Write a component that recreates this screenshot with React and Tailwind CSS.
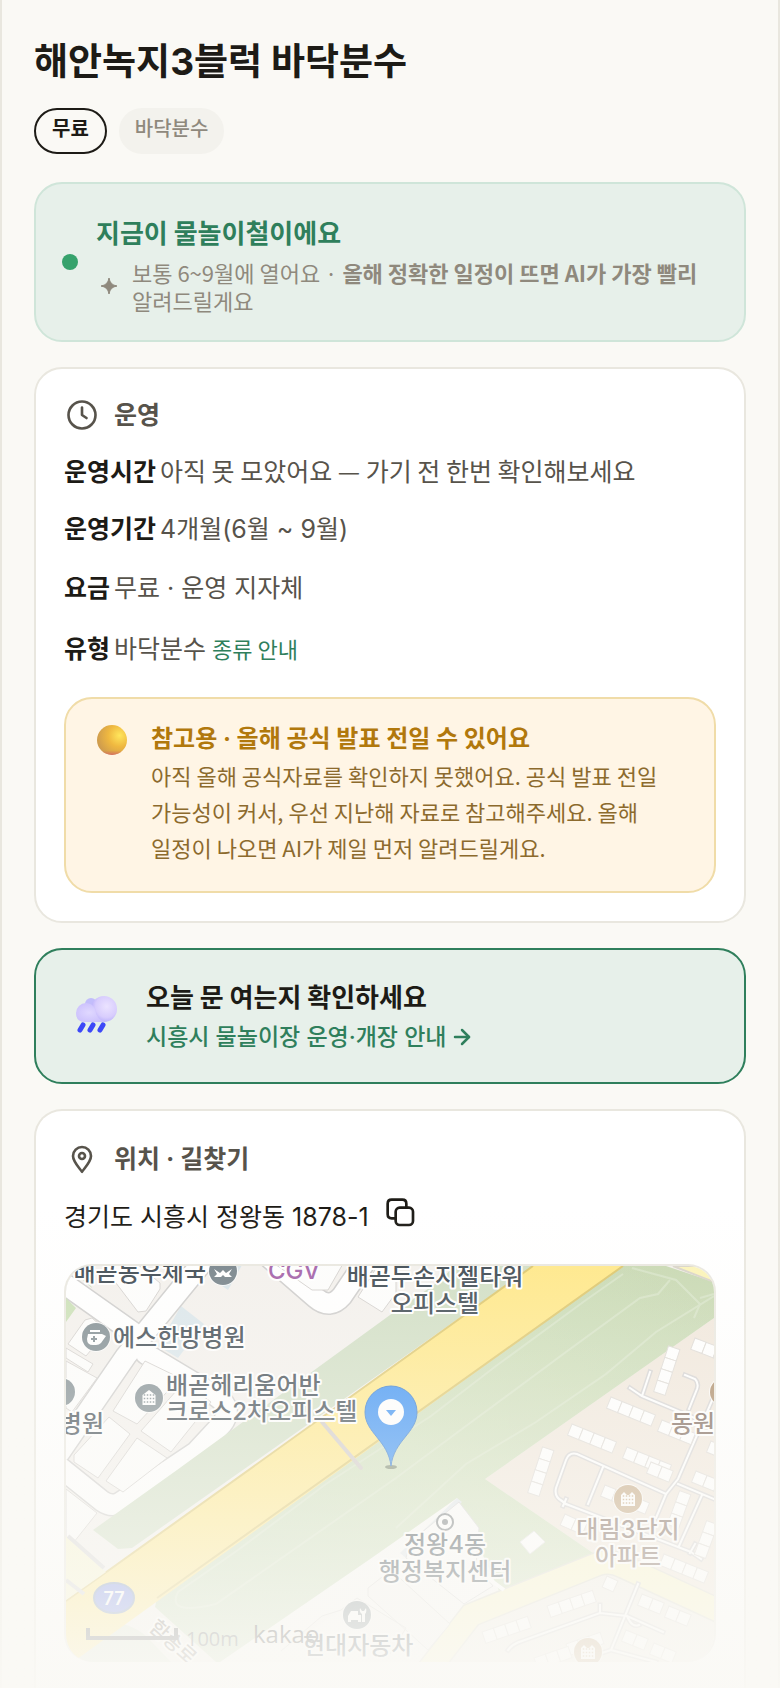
import React from 'react';
import { ArrowRight } from 'lucide-react';

const infoRows = [
  { label: '운영시간', value: '아직 못 모았어요 — 가기 전 한번 확인해보세요' },
  { label: '운영기간', value: '4개월(6월 ~ 9월)', mixed: true },
  { label: '요금', value: '무료 · 운영 지자체', mixed: true },
  { label: '유형', value: '바닥분수', link: '종류 안내' }
];

// Rows of apartment blocks: start point, number of blocks, direction in degrees
const apartmentRows = [
  { x: 629, y: 72, n: 3, angle: 21 },
  { x: 612, y: 83, n: 4, angle: 108 },
  { x: 545, y: 131, n: 4, angle: 22 },
  { x: 506, y: 158, n: 4, angle: 22 },
  { x: 561, y: 181, n: 4, angle: 22 },
  { x: 596, y: 154, n: 3, angle: 22 },
  { x: 486, y: 184, n: 4, angle: 108 },
  { x: 645, y: 175, n: 2, angle: 22 },
  { x: 630, y: 205, n: 3, angle: 22 },
  { x: 585, y: 196, n: 2, angle: 22 },
  { x: 499, y: 248, n: 2, angle: 24 },
  { x: 539, y: 219, n: 4, angle: 22 },
  { x: 623, y: 228, n: 3, angle: 110 },
  { x: 598, y: 288, n: 4, angle: 22 },
  { x: 650, y: 258, n: 3, angle: 110 },
  { x: 541, y: 310, n: 1, angle: 24 },
  { x: 481, y: 340, n: 4, angle: -19 },
  { x: 416, y: 366, n: 4, angle: -19 },
  { x: 576, y: 328, n: 2, angle: 22 },
  { x: 603, y: 340, n: 2, angle: 22 },
  { x: 560, y: 364, n: 2, angle: 22 },
  { x: 588, y: 377, n: 2, angle: 22 },
  { x: 500, y: 378, n: 3, angle: -19 },
  { x: 468, y: 392, n: 3, angle: -19 }
];

const parcels = [
  'M31 -8 L72 46 L80 45 L94 23 L94 17 L64 -8 Z',
  'M2 78 L19 54 L26 52 L41 65 L20 90 Z',
  'M0 82 L27 98 L22 106 L0 92 Z',
  'M0 95 L31 112 L6 146 L0 142 Z',
  'M79 95 L114 112 L71 158 L47 145 Z',
  'M118 116 L145 136 L105 186 L75 165 Z',
  'M43 151 L64 168 L32 212 L8 196 L8 189 Z',
  'M71 172 L101 192 L57 226 L40 215 Z',
  'M0 223 L31 247 L8 276 L0 271 Z',
  'M292 31 L314 -4 L330 -4 L330 27 L316 46 Z',
  'M206 -4 L246 24 L262 24 L278 -4 Z'
];

const lanes = [
  'M564 122 L576 130 L648 160 M576 130 L584 106 M619 109 L629 113 Q633 117 631 123 L623 143',
  'M500 238 L496 235 Q488 231 490 222 L500 194 Q503 186 511 188 L600 228 L612 213 L648 130',
  'M522 238 L537 201 M496 235 L500 238 L625 286 M500 233 L497 240 M600 228 L590 252 M612 218 L648 233 M636 229 L613 280 M625 286 L635 293 M624 287 L629 278',
  'M442 384 Q446 378 456 375 L534 347 L561 350 L597 366 M534 347 L534 339 M572 318 L545 384 L590 396 M561 350 Q566 362 573 359 M545 384 L520 392'
];

function PlacePin({ cx, cy, fill, children }) {
  return (
    <g transform={`translate(${cx} ${cy})`}>
      <circle r="15" fill="#fff" opacity="0.8" />
      <circle r="14" fill={fill} />
      {children}
    </g>
  );
}

function BuildingGlyph({ dot, twin }) {
  return (
    <>
      <path d={twin ? 'M-7 7 V-4 L-4 -7 L-1 -4 L1 -4 L4 -7 L7 -4 V7 Z' : 'M-6.5 7 V-3 L0 -8 L6.5 -3 V7 Z'} fill="#fff" />
      {[-3, 0.5, 4].map((y) =>
        [-4.5, -1.5, 1.5, 4.5].map((x) => (
          <rect key={`${x}${y}`} x={x - 0.75} y={y - 0.75} width="1.5" height="1.5" fill={dot} />
        ))
      )}
    </>
  );
}

const mapText = "font-['Inter','Noto_Sans_CJK_KR',sans-serif] text-[24px] font-medium";
const halo = { stroke: '#fff', strokeWidth: 4, strokeLinejoin: 'round', paintOrder: 'stroke' };

function MapView() {
  return (
    <svg viewBox="0 0 648 396" preserveAspectRatio="xMidYMid slice" className="block w-full" role="img" aria-label="지도">
      <defs>
        <linearGradient id="park" x1="1" y1="0" x2="0" y2="1">
          <stop offset="0" stopColor="#c5d7af" />
          <stop offset="0.5" stopColor="#cfdfba" />
          <stop offset="1" stopColor="#c6dab8" />
        </linearGradient>
      </defs>
      <rect width="648" height="396" fill="#f3f0ec" />

      {/* City blocks, top left */}
      <path d="M115 40 L138 58 L112 92 L92 80 Z M146 -8 L180 -8 L162 24 L150 16 Z" fill="#d9e5ea" />
      <g fill="none" strokeLinejoin="round" strokeLinecap="round">
        <g stroke="#cccbca" strokeWidth="23">
          <path d="M-10 12 L72 70 M140 -8 L60 90 L-6 186 M190 -20 L250 32 Q264 44 276 30 L310 -20" />
          <path d="M80 88 L150 130 Q168 142 156 158 L130 186 L55 236 Q46 242 36 235 L-10 198" />
        </g>
        <g stroke="#fff" strokeWidth="20">
          <path d="M-10 12 L72 70 M140 -8 L60 90 L-6 186 M190 -20 L250 32 Q264 44 276 30 L310 -20" />
          <path d="M80 88 L150 130 Q168 142 156 158 L130 186 L55 236 Q46 242 36 235 L-10 198" />
        </g>
      </g>
      <path d="M0 32 L10 42 L0 56 Z M10 8 L22 14 L26 22 Z" fill="#c9dfb4" />
      {parcels.map((d) => (
        <path key={d} d={d} fill="#fdfdfc" stroke="#d3d0cd" strokeWidth="1" />
      ))}

      {/* Housing area */}
      <path d="M648 52 L419 213 L527 287 L648 340 Z" fill="#f0e6da" />
      <path d="M381 396 L424 345 L541 300 L648 345 V396 Z" fill="#f1ede5" />
      <path d="M154 396 L307 291 L391 232 L440 328 L390 360 L360 396 Z" fill="#f9f8f6" />

      {/* Park strips along the highway */}
      <path d="M27 264 L111 204 L324 49 L375 14 L388 0 L467 0 L66 282 L52 283 Z" fill="#cfddc2" />
      <path d="M557 0 L91 332 L89 341 L150 396 L154 396 L307 291 L391 232 L434 327 L527 287 L419 213 L648 52 V16 L600 0 Z" fill="url(#park)" />
      <path d="M0 365 Q50 345 80 370 L105 396 H0 Z" fill="#dce5d3" />
      <g fill="none" stroke="#dde8cf" strokeWidth="2" opacity="0.6">
        <path d="M557 8 L520 34 L430 100 L365 150 L260 218 L172 284 L112 326 Q100 350 150 338 L330 212 L400 160 L500 86 L574 32 L592 28 L604 14 M648 30 L590 66 L540 108 L470 156 L400 198 L330 262" />
        <path d="M566 2 L610 14 L634 38 L628 52 M610 14 L622 26 M634 32 L648 28" />
      </g>

      {/* Highway */}
      <path d="M467 0 L0 335 V396 H7 L557 0 Z" fill="#ffe784" />
      <path d="M467 0 L0 335 M557 0 L91 332" fill="none" stroke="#dcc568" strokeWidth="2" />
      <path d="M0 270 L40 306 L0 334 Z" fill="#f8f5cf" />
      <path d="M2 270 L38 302 M0 314 L18 328" stroke="#d6d5d5" strokeWidth="4" />
      <path d="M256 156 L295 202" stroke="#cfc8c4" strokeWidth="4" strokeLinecap="round" />
      <path d="M607 0 L648 16 V0 Z" fill="#fbf3b5" stroke="#d7d2c6" strokeWidth="2" />

      {/* Side road */}
      <path d="M350 420 L405 349 L532 298 Q545 294 558 301 L660 348" fill="none" stroke="#dcdacc" strokeWidth="25" />
      <path d="M350 420 L405 349 L532 298 Q545 294 558 301 L660 348" fill="none" stroke="#faf5c6" strokeWidth="22" />

      {/* Lanes and apartments */}
      <g fill="none" strokeLinecap="square">
        {lanes.map((d) => <path key={d} d={d} stroke="#d2d0d0" strokeWidth="5" />)}
        {lanes.map((d) => <path key={`${d}-fill`} d={d} stroke="#fff" strokeWidth="2" />)}
      </g>
      {apartmentRows.map((row) => (
        <g key={`${row.x}-${row.y}`} transform={`translate(${row.x} ${row.y}) rotate(${row.angle})`} fill="#fff" stroke="#dcd8d3" strokeWidth="1">
          {Array.from({ length: row.n }, (_, i) => (
            <rect key={i} x={i * 12} y={row.angle > 90 ? -2 : 0} width="12" height="12" />
          ))}
        </g>
      ))}

      {/* Civic centre */}
      <path d="M334 287 L391 232 L396 236 L356 272 L340 292 Z" fill="#dfe5ea" />
      <path d="M344 276 L393 236 L413 262 L410 300 L427 320 L398 338 L340 292 Z" fill="#fbfafa" stroke="#d4d4d4" />
      <path d="M454 276 L468 265 L479 276 L464 288 Z" fill="#fff" stroke="#e4e4e4" />
      <path d="M302 322 L325 304 L384 358 L362 384 L302 330 Z M275 344 L291 332 L340 362 L324 388 M215 385 L256 350 L275 344" fill="#f7f5f3" stroke="#dad8d6" />
      <path d="M412 305 L438 324" stroke="#fff" strokeWidth="4" />

      {/* Places */}
      <PlacePin cx={157} cy={5} fill="#727f86">
        <path d="M-9 -2 L-3 2 L0 -1 L3 2 L9 -2 L6 3 L9 6 H2 L0 4 L-2 6 H-9 L-6 3 Z" fill="#fff" />
      </PlacePin>
      <PlacePin cx={30} cy={71} fill="#7b888d">
        <path d="M-6 -7 H4 V-5 H-6 Z M-8 -3 H6 L10 -1 L5 6 Q3 8 0 8 H-3 Q-9 8 -9 2 Z" fill="#fff" />
        <path d="M-2 -1 V5 M-5 2 H1" stroke="#7b888d" strokeWidth="2" />
      </PlacePin>
      <PlacePin cx={83} cy={132} fill="#7b888d">
        <BuildingGlyph dot="#7b888d" />
      </PlacePin>
      <PlacePin cx={-5} cy={126} fill="#7b888d" />
      <PlacePin cx={658} cy={126} fill="#a5825c" />
      <PlacePin cx={562} cy={233} fill="#bf9f76">
        <BuildingGlyph dot="#bf9f76" twin />
      </PlacePin>
      <PlacePin cx={522} cy={386} fill="#bf9f76">
        <BuildingGlyph dot="#bf9f76" twin />
      </PlacePin>
      <PlacePin cx={291} cy={349} fill="#7b888d">
        <path d="M-9 7 V1 L-6 -4 H1 V0 H4 V7 H1 V5 H-6 V7 Z M5 7 V-1 Q2 -3 3 -7 L5 -4 H7 L9 -7 Q10 -3 8 -1 V7 Z" fill="#fff" />
      </PlacePin>
      <circle cx="379" cy="256" r="8" fill="#fff" stroke="#6c7276" strokeWidth="2" />
      <circle cx="379" cy="256" r="3" fill="#6c7276" />

      <g className={mapText} fill="#36424b" {...halo}>
        <text x="140" y="15" textAnchor="end">배곧동우체국</text>
        <text x="202" y="13" fill="#a05ca6">CGV</text>
        <text x="369" y="19" textAnchor="middle">배곧두손지젤타워</text>
        <text x="369" y="46" textAnchor="middle">오피스텔</text>
        <text x="47" y="80">에스한방병원</text>
        <text x="100" y="128">배곧헤리움어반</text>
        <text x="100" y="154">크로스2차오피스텔</text>
        <text x="38" y="166" textAnchor="end">병원</text>
        <text x="379" y="287" textAnchor="middle">정왕4동</text>
        <text x="379" y="314" textAnchor="middle">행정복지센터</text>
        <text x="237" y="388">현대자동차</text>
        <text x="605" y="166" fill="#71594c">동원</text>
        <text x="562" y="272" textAnchor="middle" fill="#71594c">대림3단지</text>
        <text x="562" y="299" textAnchor="middle" fill="#71594c">아파트</text>
        <text transform="translate(82 363) rotate(42)" className="text-[20px]" fill="#77716b">함송로</text>
      </g>

      {/* Route shield */}
      <ellipse cx="48" cy="332" rx="20" ry="15" fill="#7388e8" stroke="#728bb9" strokeWidth="2" />
      <text x="48" y="339" textAnchor="middle" fill="#fff" className="font-['Inter',sans-serif] text-[18px] font-semibold">77</text>

      {/* Scale and provider */}
      <path d="M22 362 V372 H110 V362" fill="none" stroke="#55585c" strokeWidth="4" />
      <text x="120" y="380" fill="#55585c" className="font-['Open_Sans',sans-serif] text-[20px]">100m</text>
      <text x="187" y="377" fill="#333" className="font-['Open_Sans',sans-serif] text-[24px]">kakao</text>

      {/* Selected spot */}
      <ellipse cx="325" cy="201" rx="6" ry="2" fill="#4f5b46" opacity="0.7" />
      <path d="M325 200 C322 174 299 167 299 146 A26 26 0 0 1 351 146 C351 167 328 174 325 200 Z" fill="#2f8bf4" stroke="#2a74cc" strokeWidth="1" />
      <circle cx="325" cy="146" r="13" fill="#fff" />
      <path d="M320 144 H330 L325 150 Z" fill="#2f8bf4" />
    </svg>
  );
}

function Orb() {
  return (
    <svg viewBox="0 0 30 30" className="size-[30px] shrink-0" aria-hidden="true">
      <defs>
        <radialGradient id="orb" cx="0.75" cy="0.35" r="0.75">
          <stop offset="0" stopColor="#ffe65c" />
          <stop offset="0.5" stopColor="#efb840" />
          <stop offset="1" stopColor="#cf9c4d" />
        </radialGradient>
        <linearGradient id="orbBase" x1="0" y1="0" x2="0" y2="1">
          <stop offset="0.85" stopColor="#d9705c" stopOpacity="0" />
          <stop offset="1" stopColor="#d9606c" stopOpacity="0.8" />
        </linearGradient>
      </defs>
      <circle cx="15" cy="15" r="15" fill="url(#orb)" />
      <circle cx="15" cy="15" r="15" fill="url(#orbBase)" />
    </svg>
  );
}

function RainCloud() {
  return (
    <svg viewBox="1 2 48 48" className="size-12 shrink-0" aria-hidden="true">
      <defs>
        <radialGradient id="cloud" cx="0.6" cy="0.4" r="0.6">
          <stop offset="0" stopColor="#ebe3ff" />
          <stop offset="0.7" stopColor="#d8cdfd" />
          <stop offset="1" stopColor="#bdb3fb" />
        </radialGradient>
        <radialGradient id="cloudFront" cx="0.45" cy="0.5" r="0.6">
          <stop offset="0" stopColor="#e0d8ff" />
          <stop offset="1" stopColor="#cabffc" />
        </radialGradient>
      </defs>
      <circle cx="20" cy="14" r="6" fill="#c2bdfb" />
      <circle cx="33" cy="19" r="13" fill="url(#cloud)" />
      <path d="M15 13 A10 10 0 0 0 5 23 Q5 32 14 32 H34 Q25 29 24 19 A10 10 0 0 0 15 13 Z" fill="url(#cloudFront)" />
      <g stroke="#3d48f8" strokeWidth="5" strokeLinecap="round">
        <path d="M12 35 L9 40 M22 35 L19 40 M32 35 L29 40" />
      </g>
    </svg>
  );
}

function SectionTitle({ icon, children }) {
  return (
    <h2 className="flex items-center gap-[14px] font-['Inter','Noto_Sans_CJK_KR',sans-serif] text-[25px]/[36px] font-bold text-[#57534b]">
      {icon}
      {children}
    </h2>
  );
}

const iconProps = {
  viewBox: '0 0 24 24',
  fill: 'none',
  stroke: 'currentColor',
  strokeWidth: 1.75,
  strokeLinecap: 'round',
  strokeLinejoin: 'round',
  'aria-hidden': true
};

export default function App() {
  return (
    <div className="relative min-h-screen border-x-2 border-[#e9e7df] bg-[#faf9f5] px-8 pt-9 font-['Noto_Sans_CJK_KR',sans-serif] text-[#1d1b16]">
      <h1 className="font-['Inter','Noto_Sans_CJK_KR',sans-serif] text-[37px]/[52px] font-bold">해안녹지3블럭 바닥분수</h1>

      <div className="mt-5 flex gap-3 font-['Inter','Noto_Sans_CJK_KR',sans-serif] text-[20px]/[38px]">
        <span className="rounded-full border-2 border-[#1d1b16] px-4 pb-1 font-bold">무료</span>
        <span className="rounded-full border-2 border-[#f3f2ed] bg-[#f3f2ed] px-[14px] pb-1 font-medium text-[#8f897d]">바닥분수</span>
      </div>

      <main className="mt-7 flex flex-col gap-[25px]">
        <section className="flex items-center gap-[18px] rounded-[28px] border-2 border-[#cfe5d9] bg-[#e7f0ea] px-[26px] py-[26px]">
          <span className="size-4 shrink-0 rounded-full bg-[#36a26c]" />
          <div className="grow">
            <h2 className="text-[26px]/[44px] font-bold text-[#2f7f5c]">지금이 물놀이철이에요</h2>
            <div className="mt-1 flex items-center gap-3 text-[#8f897d]">
              <svg viewBox="0 0 24 24" className="size-6 shrink-0" aria-hidden="true">
                <path d="M13 4 Q14 11 21 12 Q14 13 13 20 Q12 13 5 12 Q12 11 13 4 Z" fill="currentColor" stroke="currentColor" strokeWidth="1" strokeLinejoin="round" />
              </svg>
              <p className="text-[22px]/[28px] break-keep">
                보통 6~9월에 열어요 · <b className="font-bold">올해 정확한 일정이 뜨면 AI가 가장 빨리</b> 알려드릴게요
              </p>
            </div>
          </div>
        </section>

        <section className="rounded-[28px] border-2 border-[#e9e7df] bg-white p-7">
          <SectionTitle
            icon={
              <svg {...iconProps} className="size-9">
                <circle cx="12" cy="12" r="9" />
                <path d="M12 7 V12 L15 14" />
              </svg>
            }
          >
            운영
          </SectionTitle>
          <dl className="mt-[18px] flex flex-col gap-5 text-[25px]/[39px]">
            {infoRows.map((row) => (
              <div key={row.label} className={row.mixed ? "flex gap-1 font-['Inter','Noto_Sans_CJK_KR',sans-serif]" : 'flex gap-1'}>
                <dt className="font-bold">{row.label}</dt>
                <dd className="text-[#57534b]">
                  {row.value}
                  {row.link && <a href="#types" className="ml-[6px] text-[22px] leading-none text-[#2f7f5c]">{row.link}</a>}
                </dd>
              </div>
            ))}
          </dl>
          <div className="mt-[30px] flex gap-6 rounded-[28px] border-2 border-[#f0dca8] bg-[#fff5e5] pt-[22px] pr-8 pb-[26px] pl-[31px]">
            <div className="pt-1"><Orb /></div>
            <div>
              <h3 className="font-['Inter','Noto_Sans_CJK_KR',sans-serif] text-[24px]/[36px] font-bold text-[#b1780c]">참고용 · 올해 공식 발표 전일 수 있어요</h3>
              <p className="text-[22px]/[36px] break-keep text-[#8c6a2d]">
                아직 올해 공식자료를 확인하지 못했어요. 공식 발표 전일 가능성이 커서, 우선 지난해 자료로 참고해주세요. 올해 일정이 나오면 AI가 제일 먼저 알려드릴게요.
              </p>
            </div>
          </div>
        </section>

        <a href="#notice" className="flex items-center gap-[26px] rounded-[28px] border-2 border-[#2f7f5c] bg-[#e7f0ea] px-9 py-[25px]">
          <RainCloud />
          <span>
            <strong className="block text-[26px]/[42px] font-bold">오늘 문 여는지 확인하세요</strong>
            <span className="flex items-center gap-1 font-['Inter','Noto_Sans_CJK_KR',sans-serif] text-[23px]/[40px] font-medium text-[#2f7f5c]">
              시흥시 물놀이장 운영·개장 안내
              <ArrowRight className="size-6" strokeWidth={2.5} />
            </span>
          </span>
        </a>

        <section className="rounded-t-[28px] border-2 border-b-0 border-[#e9e7df] bg-white px-7 pt-[30px] pb-[26px]">
          <SectionTitle
            icon={
              <svg {...iconProps} className="size-9">
                <path d="M12 20.5 C9 16.5 6 13.5 6 10 A6 6 0 0 1 18 10 C18 13.5 15 16.5 12 20.5 Z" />
                <circle cx="12" cy="10" r="2" />
              </svg>
            }
          >
            위치 · 길찾기
          </SectionTitle>
          <div className="mt-5 flex items-start gap-4 font-['Inter','Noto_Sans_CJK_KR',sans-serif] text-[25px]/[40px]">
            <address className="not-italic">경기도 시흥시 정왕동 1878-1</address>
            <button type="button" aria-label="주소 복사">
              <svg {...iconProps} strokeWidth="2" className="size-8">
                <rect x="8" y="8" width="13" height="13" rx="3" />
                <path d="M8 16 H5 Q2 16 2 13 V5 Q2 2 5 2 H13 Q16 2 16 5 V8" />
              </svg>
            </button>
          </div>
          <div className="mt-[27px] overflow-hidden rounded-[28px] border-2 border-b-0 border-[#e9e7df]">
            <MapView />
          </div>
        </section>
      </main>

      <div className="pointer-events-none absolute -inset-x-[2px] bottom-0 h-[480px] bg-linear-to-b from-[#faf9f5]/0 to-[#faf9f5]/94" />
    </div>
  );
}
